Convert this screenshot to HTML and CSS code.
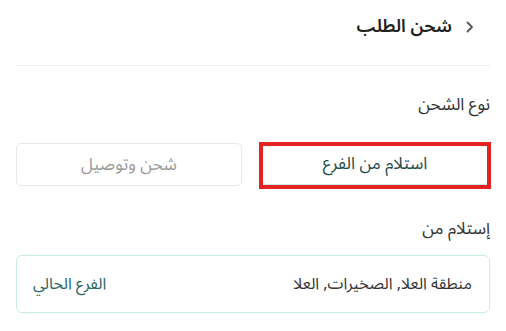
FILE: index.html
```html
<!DOCTYPE html>
<html lang="ar" dir="rtl">
<head>
<meta charset="utf-8">
<link rel="stylesheet" href="styles.css">
</head>
<body>
<div class="page">
  <header class="header">
    <svg class="chev" width="8" height="12" viewBox="0 0 8 12"><path d="M1.5 1.5 L6 6 L1.5 10.5" fill="none" stroke="#555" stroke-width="1.8" stroke-linecap="round" stroke-linejoin="round"/></svg>
    <h1 class="title">شحن الطلب</h1>
  </header>
  <div class="label first">نوع الشحن</div>
  <div class="options">
    <div class="opt active">استلام من الفرع<span class="mark"></span></div>
    <div class="opt">شحن وتوصيل</div>
  </div>
  <div class="label second">إستلام من</div>
  <div class="card">
    <span class="addr">منطقة العلا, الصخيرات, العلا</span>
    <span class="branch">الفرع الحالي</span>
  </div>
</div>
</body>
</html>
```
FILE: styles.css
```css
* { box-sizing: border-box; }
body {
  margin: 0;
  background: #fff;
  font-family: "Noto Sans Arabic", "Noto Sans", "DejaVu Sans", sans-serif;
  color: #222;
}
.page { padding: 0 16px; }
.header {
  height: 66px;
  border-bottom: 1px solid #ececec;
  display: flex;
  align-items: center;
  gap: 14px;
  padding: 0 16px 14px 0;
}
.chev { flex: none; margin-top: 2px; }
.title {
  margin: 0;
  font-size: 18px;
  line-height: 28px;
  font-weight: 600;
  color: #222;
}
.label {
  font-size: 17px;
  line-height: 24px;
  color: #333;
}
.label.first { margin-top: 27px; }
.label.second { margin-top: 31px; }
.options {
  margin-top: 26px;
  display: grid;
  grid-template-columns: 226px 226px;
  gap: 20px;
  padding-right: 2px;
}
.opt {
  position: relative;
  height: 43px;
  border: 1px solid #e8e8e8;
  border-radius: 5px;
  display: flex;
  align-items: center;
  justify-content: center;
  font-size: 17px;
  color: #9a9a9a;
}
.opt.active {
  color: #1f4d4d;
  border-color: #e2ecea;
  border-bottom: 2px solid #cfe7e3;
}
.mark {
  position: absolute;
  top: -2px;
  bottom: -5px;
  left: -4px;
  right: -4px;
  border: 4px solid #e52222;
}
.card {
  margin-top: 14px;
  height: 58px;
  border: 1px solid #c9ece5;
  border-radius: 6px;
  display: flex;
  align-items: center;
  justify-content: space-between;
  padding: 0 17px 0 16px;
  font-size: 16px;
}
.addr { color: #333; }
.branch { color: #2a6565; }
```
